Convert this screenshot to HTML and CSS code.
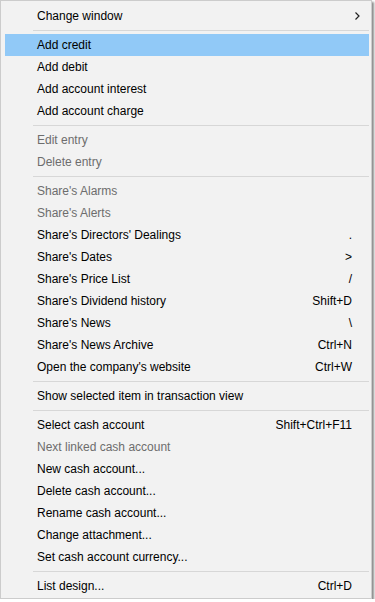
FILE: index.html
```html
<!DOCTYPE html>
<html lang="en">

<head>
    <meta charset="UTF-8">
    <meta name="viewport" content="width=device-width, initial-scale=1.0">
    <title>Context menu</title>
    <link rel="stylesheet" href="styles.css">
</head>

<body>
    <div class="menu">
        <div class="item">
            <span class="label">Change window</span>
            <svg class="arrow" width="5" height="8" viewBox="0 0 5 8"><path d="M0.5 0.5 L4 4 L0.5 7.5" fill="none" stroke="#222" stroke-width="1.2"/></svg>
        </div>
        <div class="sep"></div>
        <div class="item active"><span class="label">Add credit</span></div>
        <div class="item"><span class="label">Add debit</span></div>
        <div class="item"><span class="label">Add account interest</span></div>
        <div class="item"><span class="label">Add account charge</span></div>
        <div class="sep"></div>
        <div class="item disabled"><span class="label">Edit entry</span></div>
        <div class="item disabled"><span class="label">Delete entry</span></div>
        <div class="sep"></div>
        <div class="item disabled"><span class="label">Share's Alarms</span></div>
        <div class="item disabled"><span class="label">Share's Alerts</span></div>
        <div class="item"><span class="label">Share's Directors' Dealings</span><span class="key">.</span></div>
        <div class="item"><span class="label">Share's Dates</span><span class="key">&gt;</span></div>
        <div class="item"><span class="label">Share's Price List</span><span class="key">/</span></div>
        <div class="item"><span class="label">Share's Dividend history</span><span class="key">Shift+D</span></div>
        <div class="item"><span class="label">Share's News</span><span class="key">\</span></div>
        <div class="item"><span class="label">Share's News Archive</span><span class="key">Ctrl+N</span></div>
        <div class="item"><span class="label">Open the company's website</span><span class="key">Ctrl+W</span></div>
        <div class="sep"></div>
        <div class="item"><span class="label">Show selected item in transaction view</span></div>
        <div class="sep"></div>
        <div class="item"><span class="label">Select cash account</span><span class="key">Shift+Ctrl+F11</span></div>
        <div class="item disabled"><span class="label">Next linked cash account</span></div>
        <div class="item"><span class="label">New cash account...</span></div>
        <div class="item"><span class="label">Delete cash account...</span></div>
        <div class="item"><span class="label">Rename cash account...</span></div>
        <div class="item"><span class="label">Change attachment...</span></div>
        <div class="item"><span class="label">Set cash account currency...</span></div>
        <div class="sep"></div>
        <div class="item"><span class="label">List design...</span><span class="key">Ctrl+D</span></div>
    </div>
</body>

</html>
```

FILE: styles.css
```css
* {
    box-sizing: border-box;
}

body {
    margin: 0;
    background: #ffffff;
    font-family: "Liberation Sans", Arial, sans-serif;
    font-size: 12px;
    color: #000;
}

.menu {
    width: 372px;
    background: #f2f2f2;
    border: 1px solid #cccccc;
    padding: 4px 2px 1px 4px;
    box-shadow: 2px 2px 2px rgba(0, 0, 0, 0.45);
}

.item {
    display: flex;
    align-items: center;
    justify-content: space-between;
    height: 22px;
    padding: 0 17px 0 32px;
}

.item.active {
    background: #91c9f7;
}

.item.disabled {
    color: #6d6d6d;
}

.arrow {
    margin-right: -8px;
}

.sep {
    height: 1px;
    background: #d7d7d7;
    margin: 3px 0 3px 28px;
}
```
